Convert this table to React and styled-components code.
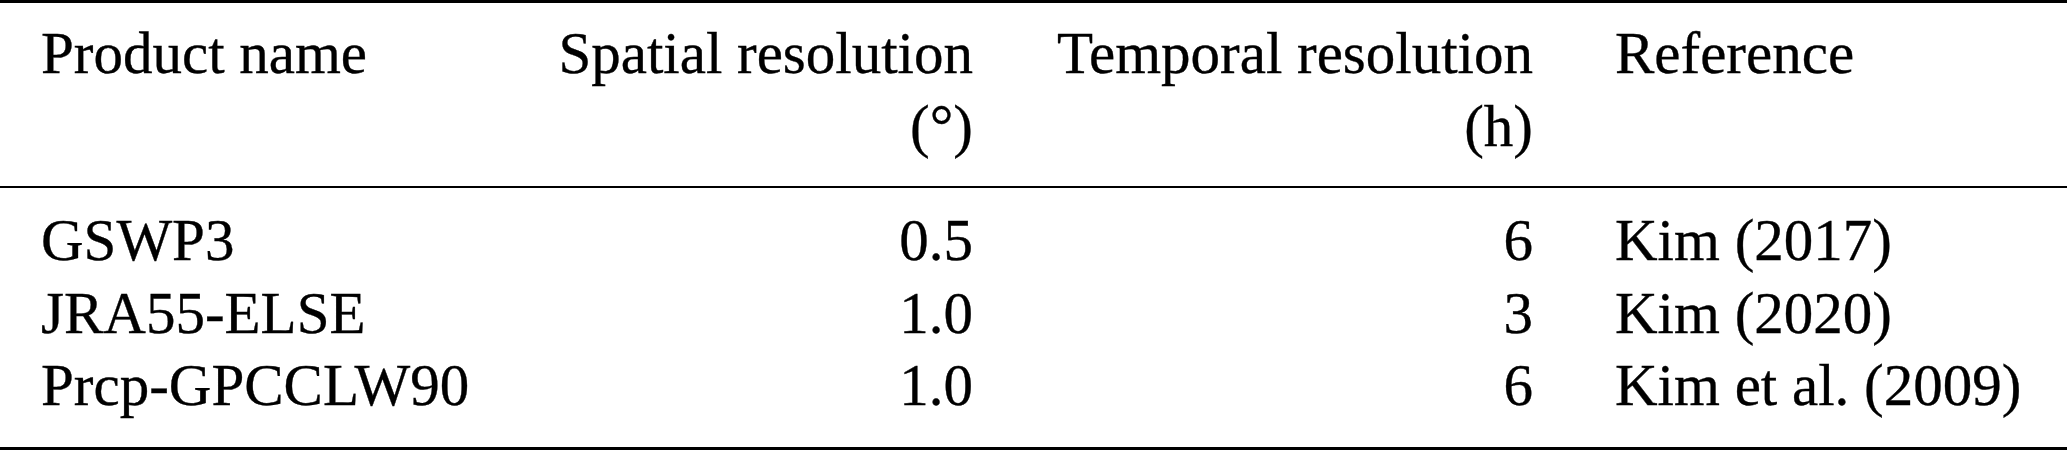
import React from 'react'
import styled, { createGlobalStyle } from 'styled-components'

const GlobalStyle = createGlobalStyle`
  html, body {
    margin: 0;
    padding: 0;
    background: #fff;
  }
`

const Table = styled.table`
  width: 2067px;
  table-layout: fixed;
  border-collapse: separate;
  border-spacing: 0;
  border-top: 3px solid #000;
  border-bottom: 3px solid #000;
  font-family: "Liberation Serif", "Times New Roman", serif;
  font-size: 59px;
  line-height: 72.5px;
  color: #000;
  -webkit-text-stroke: 0.35px #000;
`

const HeadCell = styled.th`
  font-weight: normal;
  text-align: ${props => props.align || 'left'};
  vertical-align: top;
  padding: 14px 41px 24px;
  border-bottom: 2px solid #000;
  white-space: nowrap;
`

const Cell = styled.td`
  text-align: ${props => props.align || 'left'};
  padding: 0 41px;
  white-space: nowrap;
`

const Row = styled.tr`
  &:first-child td {
    padding-top: 16px;
  }
  &:last-child td {
    padding-bottom: 25px;
  }
`

const columns = [
  { label: ['Product name'], align: 'left', width: 510 },
  { label: ['Spatial resolution', '(°)'], align: 'right', width: 504 },
  { label: ['Temporal resolution', '(h)'], align: 'right', width: 560 },
  { label: ['Reference'], align: 'left', width: 493 },
]

const rows = [
  ['GSWP3', '0.5', '6', 'Kim (2017)'],
  ['JRA55-ELSE', '1.0', '3', 'Kim (2020)'],
  ['Prcp-GPCCLW90', '1.0', '6', 'Kim et al. (2009)'],
]

const App = () => (
  <>
    <GlobalStyle />
    <Table>
      <colgroup>
        {columns.map((c, i) => <col key={i} style={{ width: c.width }} />)}
      </colgroup>
      <thead>
        <tr>
          {columns.map((c, i) => (
            <HeadCell key={i} align={c.align}>
              {c.label.map((line, j) => (
                <React.Fragment key={j}>
                  {j > 0 && <br />}
                  {line}
                </React.Fragment>
              ))}
            </HeadCell>
          ))}
        </tr>
      </thead>
      <tbody>
        {rows.map((r, i) => (
          <Row key={i}>
            {r.map((v, j) => (
              <Cell key={j} align={columns[j].align}>{v}</Cell>
            ))}
          </Row>
        ))}
      </tbody>
    </Table>
  </>
)

export default App
